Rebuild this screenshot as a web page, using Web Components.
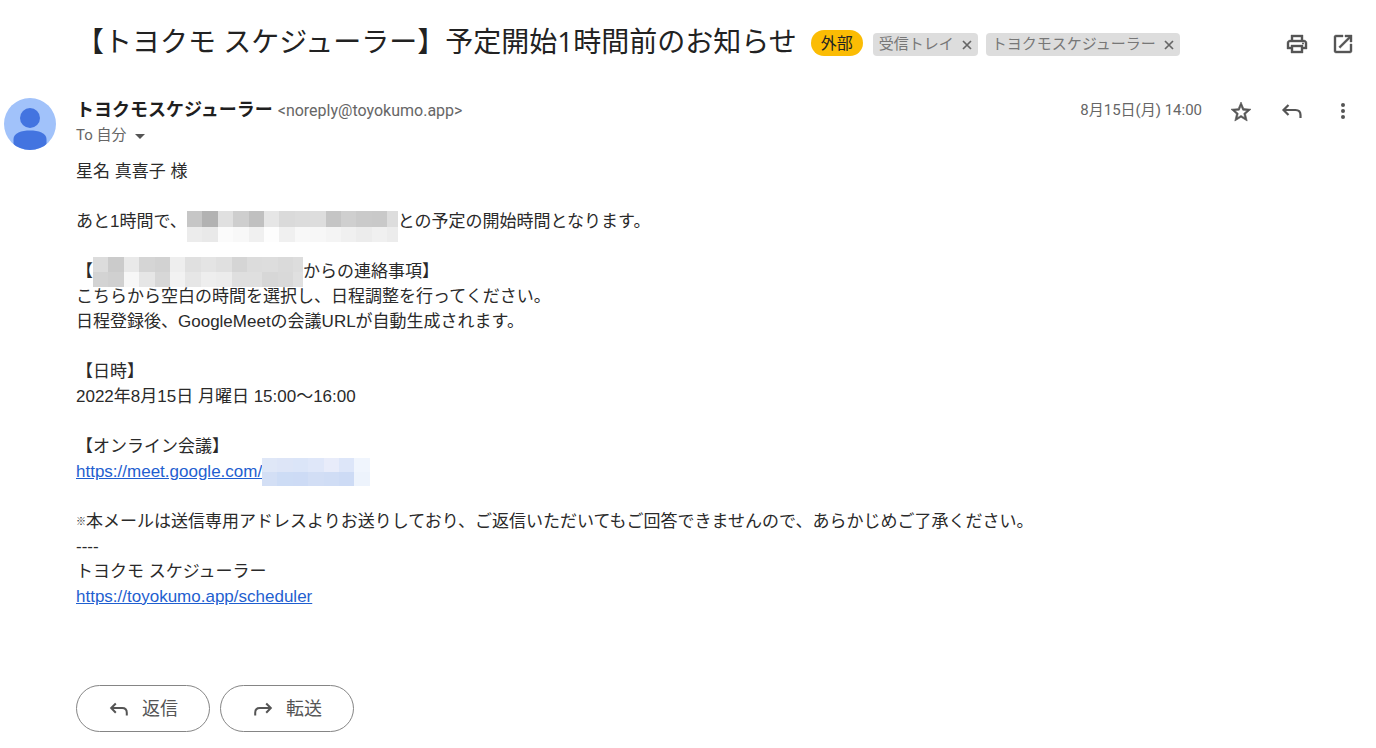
<!DOCTYPE html>
<html lang="ja">
<head>
<meta charset="utf-8">
<title>【トヨクモ スケジューラー】予定開始1時間前のお知らせ</title>
<style>
body { margin: 0; background: #fff; color: #222; font-family: "Liberation Sans", "Noto Sans CJK JP", sans-serif; }
.mark { font-size: 10px; vertical-align: 2px; line-height: 1; }
</style>
</head>
<body>
<mail-message>
  <mail-subject slot="subject">【トヨクモ スケジューラー】予定開始1時間前のお知らせ
    <mail-badge slot="labels">外部</mail-badge>
    <mail-label slot="labels">受信トレイ</mail-label>
    <mail-label slot="labels">トヨクモスケジューラー</mail-label>
    <icon-button slot="actions" icon="print" label="すべて印刷"></icon-button>
    <icon-button slot="actions" icon="open" label="新しいウィンドウで開く"></icon-button>
  </mail-subject>
  <mail-sender slot="sender">トヨクモスケジューラー
    <span slot="address">&lt;noreply@toyokumo.app&gt;</span>
    <span slot="to">To 自分</span>
    <span slot="date">8月15日(月) 14:00</span>
  </mail-sender>
  <mail-line>星名 真喜子 様</mail-line>
  <mail-line></mail-line>
  <mail-line>あと1時間で、<masked-text kind="name"></masked-text>との予定の開始時間となります。</mail-line>
  <mail-line></mail-line>
  <mail-line>【<masked-text kind="owner"></masked-text>からの連絡事項】</mail-line>
  <mail-line>こちらから空白の時間を選択し、日程調整を行ってください。</mail-line>
  <mail-line>日程登録後、GoogleMeetの会議URLが自動生成されます。</mail-line>
  <mail-line></mail-line>
  <mail-line>【日時】</mail-line>
  <mail-line>2022年8月15日 月曜日 15:00〜16:00</mail-line>
  <mail-line></mail-line>
  <mail-line>【オンライン会議】</mail-line>
  <mail-line><a href="https://meet.google.com/">https://meet.google.com/</a><masked-text kind="code"></masked-text></mail-line>
  <mail-line></mail-line>
  <mail-line><span class="mark">※</span>本メールは送信専用アドレスよりお送りしており、ご返信いただいてもご回答できませんので、あらかじめご了承ください。</mail-line>
  <mail-line>----</mail-line>
  <mail-line>トヨクモ スケジューラー</mail-line>
  <mail-line><a href="https://toyokumo.app/scheduler">https://toyokumo.app/scheduler</a></mail-line>
  <pill-button slot="footer" icon="reply">返信</pill-button>
  <pill-button slot="footer" icon="forward">転送</pill-button>
</mail-message>

<script>
const ICONS = {
  print: '<path fill="currentColor" stroke="currentColor" stroke-width=".4" d="M19 8h-1V3H6v5H5c-1.66 0-3 1.34-3 3v6h4v4h12v-4h4v-6c0-1.66-1.34-3-3-3zM8 5h8v3H8V5zm8 14H8v-4h8v4zm2-4v-2H6v2H4v-4c0-.55.45-1 1-1h14c.55 0 1 .45 1 1v4h-2z"/><circle cx="18" cy="11.5" r="1" fill="currentColor"/>',
  open: '<path fill="currentColor" stroke="currentColor" stroke-width=".4" d="M19 19H5V5h7V3H5c-1.11 0-2 .9-2 2v14c0 1.1.89 2 2 2h14c1.1 0 2-.9 2-2v-7h-2v7zM14 3v2h3.59l-9.83 9.83 1.41 1.41L19 6.41V10h2V3h-7z"/>',
  star: '<path fill="currentColor" stroke="currentColor" stroke-width=".6" transform="translate(0 1)" d="M22 9.24l-7.19-.62L12 2 9.19 8.63 2 9.24l5.46 4.73L5.82 21 12 17.27 18.18 21l-1.63-7.03L22 9.24zM12 15.4l-3.76 2.27 1-4.28-3.32-2.88 4.38-.38L12 6.1l1.71 4.04 4.38.38-3.32 2.88 1 4.28L12 15.4z"/>',
  reply: '<path fill="none" stroke="currentColor" stroke-width="2.2" d="M8.5 6L3.5 11l5 5M3.5 11H15.500q5 0 5 5v3"/>',
  forward: '<path fill="none" stroke="currentColor" stroke-width="2.2" d="M15.5 6l5 5-5 5M20.500 11H8.500q-5 0-5 5v3"/>',
  more: '<g fill="currentColor"><circle cx="12" cy="6" r="2"/><circle cx="12" cy="12" r="2"/><circle cx="12" cy="18" r="2"/></g>',
  caret: '<path fill="currentColor" d="M2 5h10l-5 5z"/>'
};
const svg = (name, size = 24, box = size) =>
  `<svg width="${size}" height="${size}" viewBox="0 0 ${box} ${box}" aria-hidden="true">${ICONS[name]}</svg>`;

class Base extends HTMLElement {
  connectedCallback() {
    if (!this.shadowRoot) this.attachShadow({ mode: 'open' }).innerHTML = this.render();
  }
}

customElements.define('mail-message', class extends Base {
  render() {
    return `<style>
      :host { display: block; padding: 20px 21px 16px 4px; }
      .body { padding: 9px 0 0 72px; }
      footer { display: flex; gap: 10px; padding: 76px 0 0 72px; }
    </style>
    <slot name="subject"></slot><slot name="sender"></slot>
    <div class="body"><slot></slot></div>
    <footer><slot name="footer"></slot></footer>`;
  }
});

customElements.define('mail-subject', class extends Base {
  render() {
    return `<style>
      :host { display: flex; align-items: center; padding-left: 72px; min-height: 46px; }
      h1 { margin: 0; padding-bottom: 4px; font: 400 28px/42px "Open Sans", "Noto Sans CJK JP", sans-serif; color: #222; }
      .labels { display: flex; align-items: center; gap: 8px; margin-left: 14px; flex: 1; }
      .actions { display: flex; gap: 22px; padding-top: 2px; }
    </style>
    <h1><slot></slot></h1>
    <div class="labels"><slot name="labels"></slot></div>
    <div class="actions"><slot name="actions"></slot></div>`;
  }
});

customElements.define('mail-badge', class extends Base {
  render() {
    return `<style>
      :host { display: block; padding: 0 10px 2px; margin-right: 2px; border-radius: 13px; background: #fbbc04; color: #222; font: 16px/24px "Noto Sans CJK JP", sans-serif; }
    </style><slot></slot>`;
  }
});

customElements.define('mail-label', class extends Base {
  render() {
    return `<style>
      :host { display: flex; align-items: center; height: 23px; padding: 0 6px; margin-top: 2px; border-radius: 4px; background: #ddd; color: #777; font: 15px/20px "Noto Sans CJK JP", sans-serif; }
      span { padding-bottom: 3px; }
      button { display: flex; align-items: center; justify-content: center; width: 10px; height: 20px; margin: 1px 0 0 8px; padding: 0; border: 0; background: none; color: #666; }
    </style><span><slot></slot></span>
    <button aria-label="ラベルを削除"><svg width="10" height="10" viewBox="0 0 10 10"><path d="M1 1l8 8M9 1l-8 8" stroke="currentColor" stroke-width="1.700"/></svg></button>`;
  }
});

customElements.define('icon-button', class extends Base {
  render() {
    return `<style>
      :host { display: block; }
      button { display: block; width: 24px; height: 24px; padding: 0; border: 0; background: none; color: #555; }
      svg { display: block; }
    </style><button aria-label="${this.getAttribute('label')}">${svg(this.getAttribute('icon'))}</button>`;
  }
});

customElements.define('mail-sender', class extends Base {
  render() {
    return `<style>
      :host { display: flex; padding-top: 32px; color: #666; font: 15px/25px Roboto, "Noto Sans CJK JP", sans-serif; }
      .avatar { width: 52px; height: 52px; margin-right: 20px; }
      .who { flex: 1; margin-top: -3px; }
      .name { color: #1f1f1f; font: 700 18px/27px "Noto Sans CJK JP", sans-serif; }
      .row { display: flex; align-items: baseline; gap: 5px; font-size: 16px; }
      .to { display: flex; align-items: center; gap: 6px; height: 25px; }
      .to button { display: flex; padding: 0; border: 0; background: none; color: #555; }
      .side { display: flex; align-items: center; height: 25px; gap: 27px; }
    </style>
    <svg class="avatar" viewBox="0 0 52 52" role="img" aria-label="プロフィール画像"><defs><clipPath id="c"><circle cx="26" cy="26" r="26"/></clipPath></defs>
      <g clip-path="url(#c)"><path fill="#a1c2fa" d="M0 0h52v52H0z"/><circle cx="26" cy="20" r="10" fill="#4374e0"/><path fill="#4374e0" d="M9.500 52V41c0-6 8-8.500 16.500-8.500s16.500 2.500 16.500 8.500v11z"/></g></svg>
    <div class="who">
      <div class="row"><span class="name"><slot></slot></span><slot name="address"></slot></div>
      <div class="to"><slot name="to"></slot><button aria-label="詳細を表示">${svg('caret', 14)}</button></div>
    </div>
    <div class="side"><slot name="date"></slot>
      <icon-button icon="star" label="スター"></icon-button>
      <icon-button icon="reply" label="返信"></icon-button>
      <icon-button icon="more" label="その他"></icon-button></div>`;
  }
});

customElements.define('mail-line', class extends Base {
  render() {
    return `<style>
      :host { display: block; min-height: 25px; font-size: 17px; line-height: 25px; color: #2a2a2a; }
      ::slotted(a) { color: #1f5fd0; }
    </style><slot></slot>`;
  }
});

const MASKS = {
  name: { width: 211, height: 31, top: 2, rows: [
    'c6c6c6 b2b2b2 e0e0e0 cecece c0c0c0 e6e6e6 dadada dcdcdc dddddd c5c5c5 cfcfcf cacaca c9c9c9 dddddd',
    'ececec e9e9e9 fbfbfb f8f8f8 f0f0f0 fdfdfd f0f0f0 f8f8f8 f7f7f7 f4f4f4 f0f0f0 ececec f0f0f0 ececec'] },
  owner: { width: 210, height: 30, top: -2, rows: [
    'dcdcdc cbcbcb e9e9e9 d5d5d5 d2d2d2 eeeeee e0e0e0 e4e4e4 e0e0e0 d5d5d5 dcdcdc dddddd dadada dddddd',
    'd3d3d3 d0d0d0 f7f7f7 e6e6e6 d7d7d7 f2f2f2 e6e6e6 eeeeee ececec dfdfdf dfdfdf d7d7d7 d9d9d9 e0e0e0'] },
  code: { width: 108, height: 28, top: -1, rows: [
    'dfe7f7 dde5f7 dbe5f8 dfe7f9 e8ecfa dde6f9 f0f5fd',
    'd3dff5 cddcf5 cddbf5 d2def5 d0ddf5 cddbf5 edf3fc'] }
};

customElements.define('masked-text', class extends Base {
  render() {
    const m = MASKS[this.getAttribute('kind')];
    const cell = 15.4, h = m.height / 2;
    const rects = m.rows.map((row, y) => row.split(' ').map((c, x) =>
      `<rect x="${x * cell}" y="${y * h}" width="${cell}" height="${h}" fill="#${c}"/>`).join('')).join('');
    return `<style>
      :host { display: inline-block; vertical-align: top; height: ${m.height}px; margin: ${m.top}px 0 ${25 - m.height - m.top}px; }
      svg { display: block; }
    </style><svg width="${m.width}" height="${m.height}" shape-rendering="crispEdges" aria-hidden="true">${rects}</svg>`;
  }
});

customElements.define('pill-button', class extends Base {
  render() {
    return `<style>
      :host { display: block; }
      button { display: flex; align-items: center; justify-content: center; gap: 12px; width: 134px; height: 47px; padding: 0; border: 1px solid #858585; border-radius: 24px; background: #fff; color: #555; font: 18px/26px "Noto Sans CJK JP", sans-serif; }
      span { padding-bottom: 3px; }
    </style><button>${svg(this.getAttribute('icon'), 22, 24)}<span><slot></slot></span></button>`;
  }
});
</script>
</body>
</html>
